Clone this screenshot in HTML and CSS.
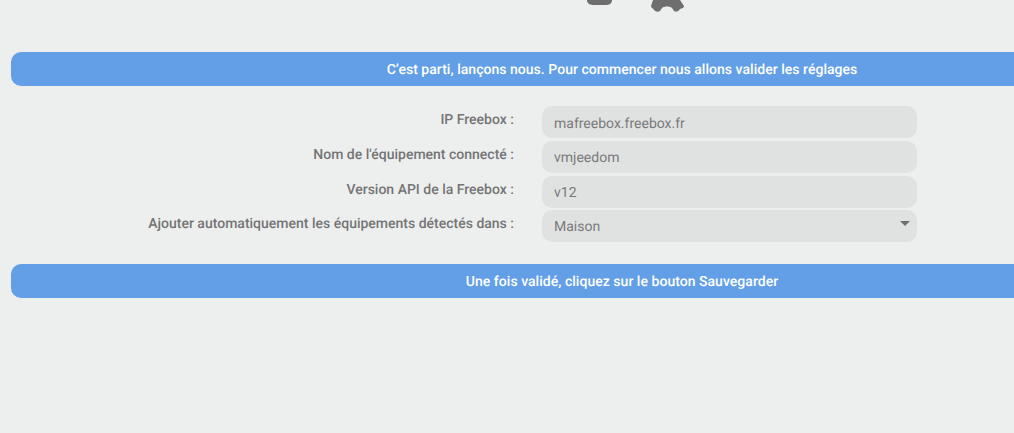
FILE: index.html
```html
<!DOCTYPE html>
<html lang="fr">
<head>
  <meta charset="UTF-8" />
  <title>Freebox OS</title>
  <link rel="stylesheet" href="styles.css">
</head>
<body>
  <div class="logo">
    <svg width="120" height="14" viewBox="0 0 120 14">
      <path d="M7 0H32V1C31 4 29 5 26 5H14C10 5 8 4 7 1Z" />
      <path d="M73 0H100L104 6C104 8 102 8 100 9C98 12 96 12 94 11L92 8C90 6 84 6 82 8L80 11C78 12 76 12 74 10C73 8 71 8 71 6Z" />
    </svg>
  </div>

  <div class="banner">C’est parti, lançons nous. Pour commencer nous allons valider les réglages</div>

  <form class="settings">
    <div class="row">
      <label>IP Freebox :</label>
      <input class="first" type="text" value="mafreebox.freebox.fr">
    </div>
    <div class="row">
      <label>Nom de l'équipement connecté :</label>
      <input type="text" value="vmjeedom">
    </div>
    <div class="row row-api">
      <label>Version API de la Freebox :</label>
      <input type="text" value="v12">
    </div>
    <div class="row">
      <label>Ajouter automatiquement les équipements détectés dans :</label>
      <div class="select">Maison</div>
    </div>
  </form>

  <div class="banner banner-end">Une fois validé, cliquez sur le bouton Sauvegarder</div>
</body>
</html>
```

FILE: styles.css
```css
html, body {
  height: 100%;
}
body {
  margin: 0;
  overflow: hidden;
  background-color: #edefef;
  color: #757575;
  font-family: Roboto, sans-serif;
  font-size: 14px;
  text-rendering: geometricPrecision;
}
.logo {
  height: 52px;
  padding-left: 580px;
}
.logo svg {
  display: block;
  fill: #6e6e6e;
}
.banner {
  height: 34px;
  margin-left: 11px;
  padding-left: 219px;
  line-height: 36px;
  border-radius: 10px 0 0 10px;
  background-color: #629fe6;
  color: #fff;
  font-weight: 500;
  letter-spacing: 0.03px;
  text-align: center;
}
.settings {
  margin-top: 20px;
}
.row {
  display: flex;
  height: 32px;
  margin-bottom: 3px;
}
.row-api {
  margin-bottom: 2px;
}
.row label {
  box-sizing: border-box;
  width: 542px;
  padding-right: 28px;
  line-height: 29px;
  text-align: right;
  font-weight: 500;
}
.row input, .select {
  box-sizing: border-box;
  width: 375px;
  height: 32px;
  padding: 1px 12px 0;
  border: none;
  border-radius: 10px;
  background-color: #e0e2e2;
  color: #7a7a7a;
  font-family: Roboto, sans-serif;
  font-size: 14px;
  line-height: 32px;
  text-rendering: geometricPrecision;
}
.row input.first {
  padding-top: 3px;
}
.select {
  position: relative;
}
.select::after {
  content: "";
  position: absolute;
  top: 11px;
  right: 7px;
  border-left: 5px solid transparent;
  border-right: 5px solid transparent;
  border-top: 5px solid #6e6e6e;
}
.row:last-child {
  margin-bottom: 0;
}
.banner-end {
  margin-top: 22px;
}
```
